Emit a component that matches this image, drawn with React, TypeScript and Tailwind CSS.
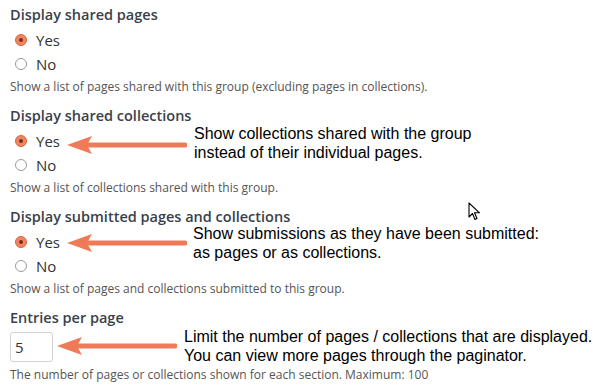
import React from "react";

const ARROW = "#ef7a58";

function Radio({ checked, label }: { checked: boolean; label: string }) {
  return (
    <div className="flex items-center h-[24px] pl-[5px]">
      {checked ? (
        <span className="w-[12px] h-[12px] rounded-full border border-[#d9643f] bg-[#f08563] flex items-center justify-center">
          <span className="w-[4px] h-[4px] rounded-full bg-[#7a2d17]" />
        </span>
      ) : (
        <span className="w-[12px] h-[12px] rounded-full border border-[#9a9a9a] bg-white" />
      )}
      <span className="ml-[9px] text-[15px] text-[#333]">{label}</span>
    </div>
  );
}

function Arrow({ width }: { width: number }) {
  return (
    <svg width={width} height={18} viewBox={`0 0 ${width} 18`} className="block">
      <polygon points={`0,9 25,0 20,9 25,18`} fill={ARROW} />
      <line x1={18} y1={9} x2={width - 2} y2={9} stroke={ARROW} strokeWidth={5} strokeLinecap="round" />
    </svg>
  );
}

function Section({ title, help }: { title: string; help: string }) {
  return (
    <div className="mb-[11px]">
      <div className="h-[20px] leading-[20px] text-[14.5px] font-semibold text-[#3a3f4a]">{title}</div>
      <div className="mt-[3px]">
        <Radio checked label="Yes" />
        <Radio checked={false} label="No" />
      </div>
      <div className="mt-[3px] h-[16px] leading-[16px] text-[12px] text-[#555]">{help}</div>
    </div>
  );
}

export default function App() {
  return (
    <div className="relative w-[598px] h-[386px] bg-white overflow-hidden" style={{ fontFamily: '"Open Sans", sans-serif' }}>
      <div className="pt-[5px] pl-[10px]">
        <Section
          title="Display shared pages"
          help="Show a list of pages shared with this group (excluding pages in collections)."
        />
        <Section title="Display shared collections" help="Show a list of collections shared with this group." />
        <Section
          title="Display submitted pages and collections"
          help="Show a list of pages and collections submitted to this group."
        />
        <div>
          <div className="h-[20px] leading-[20px] text-[14.5px] font-semibold text-[#3a3f4a]">Entries per page</div>
          <div className="mt-[4px] w-[43px] h-[30px] border border-[#cfd3d8] rounded-[3px] flex items-center pl-[4px] text-[15px] text-[#333]">
            5
          </div>
          <div className="mt-[5px] h-[16px] leading-[16px] text-[12px] text-[#555]">
            The number of pages or collections shown for each section. Maximum: 100
          </div>
        </div>
      </div>

      {/* annotations */}
      <div className="absolute left-[67px] top-[136px]">
        <Arrow width={120} />
      </div>
      <div
        className="absolute left-[194px] top-[124px] text-[16px] leading-[19px] text-black"
        style={{ fontFamily: '"Liberation Sans", Arial, sans-serif' }}
      >
        <div>Show collections shared with the group</div>
        <div>instead of their individual pages.</div>
      </div>

      <div className="absolute left-[67px] top-[234px]">
        <Arrow width={120} />
      </div>
      <div
        className="absolute left-[193px] top-[224px] text-[16px] leading-[19px] text-black"
        style={{ fontFamily: '"Liberation Sans", Arial, sans-serif' }}
      >
        <div>Show submissions as they have been submitted:</div>
        <div>as pages or as collections.</div>
      </div>

      <div className="absolute left-[57px] top-[337px]">
        <Arrow width={120} />
      </div>
      <div
        className="absolute left-[184px] top-[327px] text-[16px] leading-[19px] text-black"
        style={{ fontFamily: '"Liberation Sans", Arial, sans-serif' }}
      >
        <div>Limit the number of pages / collections that are displayed.</div>
        <div>You can view more pages through the paginator.</div>
      </div>

      {/* mouse cursor */}
      <svg className="absolute left-[468px] top-[202px]" width="14" height="20" viewBox="0 0 14 20">
        <path d="M1 1 L1 15 L4.5 11.5 L7 17.5 L9 16.5 L6.5 10.8 L11.5 10.8 Z" fill="white" stroke="black" strokeWidth="1.1" strokeLinejoin="round" />
      </svg>
    </div>
  );
}
